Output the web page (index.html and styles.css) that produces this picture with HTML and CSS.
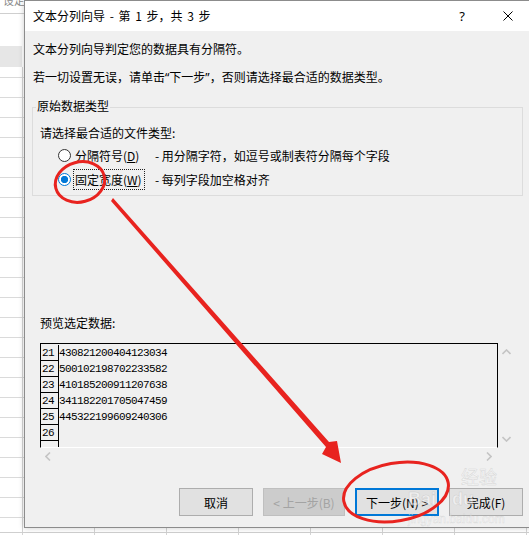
FILE: index.html
```html
<!DOCTYPE html>
<html lang="zh-CN">
<head>
<meta charset="utf-8">
<title>文本分列向导</title>
<link rel="stylesheet" href="styles.css">
</head>
<body>
<div class="sheet-top">设定</div>

<div class="dialog">
  <div class="titlebar">
    <span class="title">文本分列向导 - 第 1 步，共 3 步</span>
    <span class="tbtn help">?</span>
    <span class="tbtn close"><svg width="10" height="10" viewBox="0 0 10 10"><path d="M0.5 0.5L9.5 9.5M9.5 0.5L0.5 9.5" stroke="#000" stroke-width="1" fill="none"/></svg></span>
  </div>
  <div class="content">
    <p class="l1">文本分列向导判定您的数据具有分隔符。</p>
    <p class="l2">若一切设置无误，请单击<span class="q">“</span>下一步<span class="q">”</span>，否则请选择最合适的数据类型。</p>
    <div class="group">
      <div class="legend">原始数据类型</div>
      <div class="prompt">请选择最合适的文件类型:</div>
      <div class="opt first"><span class="radio"></span><span class="lbl">分隔符号(<u>D</u>)</span><span class="desc">- 用分隔字符，如逗号或制表符分隔每个字段</span></div>
      <div class="opt"><span class="radio on"></span><span class="lbl focus">固定宽度(<u>W</u>)</span><span class="desc">- 每列字段加空格对齐</span></div>
    </div>
    <div class="plabel">预览选定数据:</div>
    <div class="preview">
      <div class="pbox">
        <div class="rows">
          <div class="row"><span class="num">21</span><span class="data">430821200404123034</span></div>
          <div class="row"><span class="num">22</span><span class="data">500102198702233582</span></div>
          <div class="row"><span class="num">23</span><span class="data">410185200911207638</span></div>
          <div class="row"><span class="num">24</span><span class="data">341182201705047459</span></div>
          <div class="row"><span class="num">25</span><span class="data">445322199609240306</span></div>
          <div class="row"><span class="num">26</span><span class="data"></span></div>
          <div class="row"><span class="num"></span><span class="data"></span></div>
        </div>
      </div>
      <div class="vscroll">
        <svg width="9" height="6" viewBox="0 0 9 6"><path d="M0.5 5L4.5 1L8.5 5" stroke="#c4c4c4" stroke-width="1.6" fill="none"/></svg>
        <svg width="9" height="6" viewBox="0 0 9 6"><path d="M0.5 1L4.5 5L8.5 1" stroke="#c4c4c4" stroke-width="1.6" fill="none"/></svg>
      </div>
      <div class="hscroll">
        <svg width="6" height="9" viewBox="0 0 6 9"><path d="M5 0.5L1 4.5L5 8.5" stroke="#c4c4c4" stroke-width="1.6" fill="none"/></svg>
        <svg width="6" height="9" viewBox="0 0 6 9"><path d="M1 0.5L5 4.5L1 8.5" stroke="#c4c4c4" stroke-width="1.6" fill="none"/></svg>
      </div>
      <div class="corner"></div>
    </div>
    <div class="buttons">
      <div class="btn w74">取消</div>
      <div class="btn disabled w82">&lt; 上一步(B)</div>
      <div class="btn default w84">下一步(N) &gt;</div>
      <div class="btn w74">完成(F)</div>
    </div>
  </div>
</div>

<div class="watermark">
  <span class="wm-bai">Bai</span><span class="wm-du">du</span><span class="wm-jy">经验</span>
  <span class="wm-url">jingyan.baidu.com</span>
</div>

<svg class="annot" width="529" height="535" viewBox="0 0 529 535">
  <ellipse cx="80" cy="182" rx="25" ry="20" transform="rotate(-15 80 182)" fill="none" stroke="#e8231f" stroke-width="3"/>
  <polygon points="111,201 113,198 329,442 337,441 341,463 322,454 326,447" fill="#e8231f"/>
  <ellipse cx="396" cy="492" rx="53" ry="29" transform="rotate(-10 396 492)" fill="none" stroke="#e8231f" stroke-width="3"/>
</svg>
</body>
</html>
```
FILE: styles.css
```css
* { box-sizing: border-box; }
html, body { margin: 0; padding: 0; }
body {
  width: 529px;
  height: 535px;
  overflow: hidden;
  position: relative;
  font-family: "Noto Sans CJK SC", "Microsoft YaHei", sans-serif;
  background-color: #fff;
  background-image:
    linear-gradient(#cfcfcf, #cfcfcf),
    linear-gradient(#e6e6e6, #e6e6e6),
    linear-gradient(#cfcfcf, #cfcfcf),
    repeating-linear-gradient(to right, #d4d4d4 0 1px, transparent 1px 72px),
    repeating-linear-gradient(to bottom, #dadada 0 1px, transparent 1px 20px);
  background-position: 0 13px, 0 46px, 0 532px, 22px 67px, 0 77px;
  background-size: 100% 1px, 22px 21px, 100% 1px, 100% 100%, 100% 100%;
  background-repeat: no-repeat;
}

.sheet-top {
  font-size: 11px;
  line-height: 11px;
  color: #8a8a8a;
  margin-top: -5px;
  padding-left: 3px;
}

.dialog {
  position: absolute;
  left: 24px;
  top: 0;
  width: 508px;
  border: 1px solid #8c8c8c;
  background: #f0f0f0;
  box-shadow: 0 0 6px rgba(0, 0, 0, 0.2);
  font-size: 12px;
  color: #000;
}

.titlebar {
  height: 30px;
  background: #fff;
  display: flex;
  align-items: center;
  padding-left: 8px;
  padding-bottom: 1px;
}
.title { flex: 1; font-size: 12px; line-height: 16px; word-spacing: 2px; }
.tbtn {
  width: 46px;
  height: 28px;
  display: flex;
  align-items: center;
  justify-content: center;
}
.help { font-size: 13px; font-family: "Noto Sans", sans-serif; }

.content { padding: 0 0 11px 8px; }
.l1 { margin: 10px 0 0; line-height: 16px; }
.l2 { margin: 12px 0 0; line-height: 16px; }
.q { font-family: "Noto Sans", sans-serif; }

.group {
  width: 491px;
  margin: 21px 0 0 -1px;
  border: 1px solid #dcdcdc;
  padding: 0 0 4px 7px;
}
.legend {
  display: table;
  margin: -10px 0 0 -4px;
  padding: 0 1px;
  line-height: 16px;
  background: #f0f0f0;
}
.prompt { margin-top: 11px; line-height: 16px; }
.opt {
  display: flex;
  align-items: center;
  height: 24px;
  padding-left: 18px;
}
.opt.first { margin-top: 2px; }
.radio {
  width: 13px;
  height: 13px;
  border: 1px solid #333;
  border-radius: 50%;
  background: #fff;
  margin-right: 2px;
  flex: none;
}
.radio.on {
  border-color: #0078d7;
  background: radial-gradient(circle, #0078d7 0 3.4px, #fff 3.9px);
}
.lbl {
  width: 72px;
  height: 21px;
  line-height: 19px;
  padding-left: 1px;
  border: 1px dotted transparent;
  white-space: nowrap;
}
.lbl.focus { border-color: #222; }
.desc { margin-left: 10px; white-space: nowrap; }

.plabel { margin: 119px 0 0 7px; line-height: 16px; }

.preview {
  margin: 12px 0 0 7px;
  display: grid;
  grid-template-columns: 458px 17px;
  grid-template-rows: 105px 16px;
}
.pbox {
  border: 1px solid #000;
  border-bottom-color: #fff;
  overflow: hidden;
}
.rows { padding-top: 1px; }
.row { display: flex; height: 16px; }
.num {
  width: 18px;
  height: 16px;
  border-right: 1px solid #000;
  border-bottom: 1px solid #000;
  padding-left: 1px;
  font-family: "Liberation Mono", "DejaVu Sans Mono", monospace;
  font-size: 11px;
  letter-spacing: -0.6px;
  line-height: 17px;
}
.data {
  font-family: "Liberation Mono", "DejaVu Sans Mono", monospace;
  font-size: 11px;
  letter-spacing: -0.6px;
  line-height: 16px;
}
.vscroll {
  display: flex;
  flex-direction: column;
  align-items: center;
  justify-content: space-between;
  padding: 6px 0 6px;
}
.hscroll {
  display: flex;
  align-items: center;
  justify-content: space-between;
  padding: 0 6px 0 5px;
}

.buttons {
  display: flex;
  gap: 10px;
  margin: 24px 0 0 146px;
}
.btn {
  height: 28px;
  border: 1px solid #adadad;
  background: #e1e1e1;
  display: flex;
  align-items: center;
  justify-content: center;
  white-space: nowrap;
}
.w74 { width: 74px; }
.w82 { width: 82px; }
.w84 { width: 84px; }
.btn.disabled { background: #cccccc; border-color: #bfbfbf; color: #a3a3a3; }
.btn.default { border: 2px solid #0078d7; }

.watermark {
  position: absolute;
  left: 405px;
  top: 462px;
  width: 124px;
  height: 70px;
  pointer-events: none;
  font-family: "Liberation Sans", sans-serif;
  color: rgba(255, 255, 255, 0.45);
  -webkit-text-stroke: 0.5px rgba(160, 160, 160, 0.35);
}
.wm-bai, .wm-du, .wm-jy, .wm-url { position: absolute; }
.wm-bai { left: 3px; top: 27px; font-size: 18px; font-weight: bold; }
.wm-du { left: 47px; top: 27px; font-size: 18px; font-weight: bold; }
.wm-jy { left: 56px; top: 1px; font-size: 18px; font-family: "Noto Sans CJK SC", sans-serif; }
.wm-url { left: 3px; top: 50px; font-size: 12px; -webkit-text-stroke: 0.4px rgba(160, 160, 160, 0.35); }

.annot {
  position: absolute;
  left: 0;
  top: 0;
  pointer-events: none;
}
```
